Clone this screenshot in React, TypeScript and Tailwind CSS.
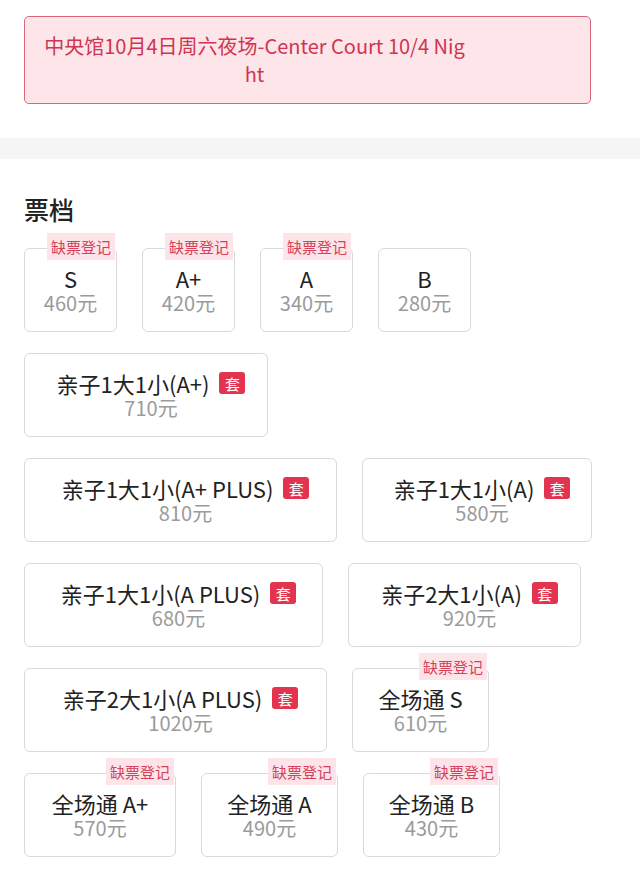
import React from 'react';

interface Ticket {
  name: string;
  price: number;
  width: number;
  suite?: boolean;
  soldOut?: boolean;
}

const tickets: Ticket[] = [
  { name: 'S', price: 460, width: 93, soldOut: true },
  { name: 'A+', price: 420, width: 93, soldOut: true },
  { name: 'A', price: 340, width: 93, soldOut: true },
  { name: 'B', price: 280, width: 93 },
  { name: '亲子1大1小(A+)', price: 710, width: 244, suite: true },
  { name: '亲子1大1小(A+ PLUS)', price: 810, width: 313, suite: true },
  { name: '亲子1大1小(A)', price: 580, width: 230, suite: true },
  { name: '亲子1大1小(A PLUS)', price: 680, width: 299, suite: true },
  { name: '亲子2大1小(A)', price: 920, width: 233, suite: true },
  { name: '亲子2大1小(A PLUS)', price: 1020, width: 303, suite: true },
  { name: '全场通 S', price: 610, width: 137, soldOut: true },
  { name: '全场通 A+', price: 570, width: 152, soldOut: true },
  { name: '全场通 A', price: 490, width: 137, soldOut: true },
  { name: '全场通 B', price: 430, width: 137, soldOut: true },
];

function TicketCard({ ticket }: { ticket: Ticket }) {
  return (
    <div
      className="relative flex h-[84px] flex-col items-center justify-center rounded-[6px] border border-[#d9d9d9] bg-white"
      style={{ width: ticket.width }}
    >
      {ticket.soldOut && (
        <span className="absolute right-[1px] top-[-16px] bg-[#fde4e9] px-[4px] text-[15px] leading-[27px] text-[#d5405a]">
          缺票登记
        </span>
      )}
      <div className={ticket.suite ? 'flex items-center pl-[10px]' : 'flex items-center'}>
        <span className="text-[22px] leading-[26px] text-[#222]">{ticket.name}</span>
        {ticket.suite && (
          <span className="ml-[10px] flex h-[22px] w-[26px] items-center justify-center rounded-[3px] bg-[#e2344e] text-[15px] leading-none text-white">
            套
          </span>
        )}
      </div>
      <div
        className={
          ticket.suite
            ? 'pl-[10px] text-[20px] leading-[24px] text-[#9b9b9b]'
            : 'text-[20px] leading-[24px] text-[#9b9b9b]'
        }
      >
        {ticket.price}元
      </div>
    </div>
  );
}

export default function App() {
  return (
    <div className="min-h-[887px] w-[640px] bg-white font-['Noto_Sans_CJK_SC',sans-serif]">
      <div className="px-6 pt-4">
        <div className="w-[567px] rounded-[5px] border border-[#d9667a] bg-[#fde5e9] pb-[15px] pl-[16px] pr-[122px] pt-[15px] text-center text-[20px] leading-[28px] text-[#cf3552]">
          <div className="whitespace-nowrap">中央馆10月4日周六夜场-Center Court 10/4 Nig</div>
          <div>ht</div>
        </div>
      </div>

      <div className="mt-[34px] h-[21px] bg-[#f5f5f5]" />

      <div className="px-6 pt-[34px]">
        <h2 className="text-[25px] font-medium leading-[32px] text-[#222]">票档</h2>
        <div className="mt-[23px] flex w-[576px] flex-wrap gap-x-[25px] gap-y-[21px]">
          {tickets.map((t) => (
            <TicketCard key={t.name} ticket={t} />
          ))}
        </div>
      </div>
    </div>
  );
}
